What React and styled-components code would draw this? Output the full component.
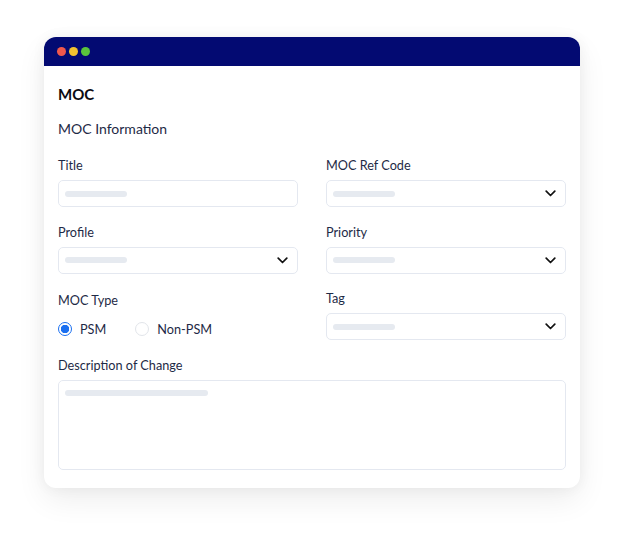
import styled, { createGlobalStyle } from 'styled-components';

const GlobalStyle = createGlobalStyle`
  body {
    margin: 0;
    background: #ffffff;
    font-family: Lato, "Open Sans", Arial, sans-serif;
  }
`;

const Chevron = () => (
  <svg width="11" height="7" viewBox="0 0 11 7" fill="none">
    <path d="M1.2 1.2L5.5 5.5L9.8 1.2" stroke="#111" strokeWidth="1.7" strokeLinecap="round" strokeLinejoin="round" />
  </svg>
);

const App = () => {
  return (
    <Page>
      <GlobalStyle />
      <Window>
        <TitleBar>
          <Dot color="#f0584c" />
          <Dot color="#f2c230" />
          <Dot color="#5ac43c" />
        </TitleBar>
        <Body>
          <Heading>MOC</Heading>
          <Section>MOC Information</Section>
          <Grid>
            <Field>
              <Label>Title</Label>
              <Input>
                <Placeholder w={62} />
              </Input>
            </Field>
            <Field>
              <Label>MOC Ref Code</Label>
              <Input>
                <Placeholder w={62} />
                <Chevron />
              </Input>
            </Field>
            <Field>
              <Label>Profile</Label>
              <Input>
                <Placeholder w={62} />
                <Chevron />
              </Input>
            </Field>
            <Field>
              <Label>Priority</Label>
              <Input>
                <Placeholder w={62} />
                <Chevron />
              </Input>
            </Field>
            <Field shift>
              <Label>MOC Type</Label>
              <RadioRow>
                <Option>
                  <Radio checked />
                  PSM
                </Option>
                <Option>
                  <Radio />
                  Non-PSM
                </Option>
              </RadioRow>
            </Field>
            <Field>
              <Label>Tag</Label>
              <Input>
                <Placeholder w={62} />
                <Chevron />
              </Input>
            </Field>
            <Field wide>
              <Label>Description of Change</Label>
              <TextArea>
                <Placeholder w={143} />
              </TextArea>
            </Field>
          </Grid>
        </Body>
      </Window>
    </Page>
  );
};

export default App;

const Page = styled.div`
  width: 624px;
  height: 538px;
  padding: 37px 0 0 44px;
  box-sizing: border-box;
`;

const Window = styled.div`
  width: 536px;
  background: #fff;
  border-radius: 12px;
  overflow: hidden;
  box-shadow: 0 12px 30px rgba(0, 0, 0, 0.07), 0 0 14px rgba(0, 0, 0, 0.05);
`;

const TitleBar = styled.div`
  height: 29px;
  background: #030a72;
  display: flex;
  align-items: center;
  gap: 3px;
  padding-left: 13px;
`;

const Dot = styled.span`
  width: 9px;
  height: 9px;
  border-radius: 50%;
  background: ${props => props.color};
`;

const Body = styled.div`
  padding: 18px 14px 18px;
`;

const Heading = styled.div`
  font-size: 15px;
  font-weight: 700;
  line-height: 20px;
  color: #0b0b12;
`;

const Section = styled.div`
  margin-top: 15px;
  font-size: 14px;
  line-height: 20px;
  color: #1e2a46;
`;

const Grid = styled.div`
  margin-top: 17px;
  display: grid;
  grid-template-columns: 240px 240px;
  column-gap: 28px;
  row-gap: 15.5px;
`;

const Field = styled.div`
  display: flex;
  flex-direction: column;
  gap: 6px;
  grid-column: ${props => (props.wide ? '1 / -1' : 'auto')};
  padding-top: ${props => (props.shift ? '2px' : '0')};
`;

const Label = styled.div`
  font-size: 12.7px;
  line-height: 18px;
  color: #1e2a46;
`;

const Input = styled.div`
  height: 27px;
  box-sizing: border-box;
  border: 1px solid #e4e8f0;
  border-radius: 5px;
  display: flex;
  align-items: center;
  justify-content: space-between;
  padding: 0 9px 0 6px;
`;

const TextArea = styled.div`
  height: 90px;
  box-sizing: border-box;
  border: 1px solid #e4e8f0;
  border-radius: 5px;
  padding: 9px 6px;
`;

const Placeholder = styled.div`
  width: ${props => props.w}px;
  height: 6px;
  border-radius: 3px;
  background: #e6eaf0;
`;

const RadioRow = styled.div`
  display: flex;
  gap: 29px;
  margin-top: 5px;
`;

const Option = styled.label`
  display: flex;
  align-items: center;
  gap: 8px;
  font-size: 12.7px;
  line-height: 18px;
  color: #1e2a46;
`;

const Radio = styled.span`
  width: 14px;
  height: 14px;
  box-sizing: border-box;
  border-radius: 50%;
  border: ${props => (props.checked ? '1.5px solid #1a6ff0' : '1px solid #e2e5ea')};
  background: ${props => (props.checked ? 'radial-gradient(circle, #1a6ff0 0 4px, #fff 4.5px)' : '#fff')};
`;
